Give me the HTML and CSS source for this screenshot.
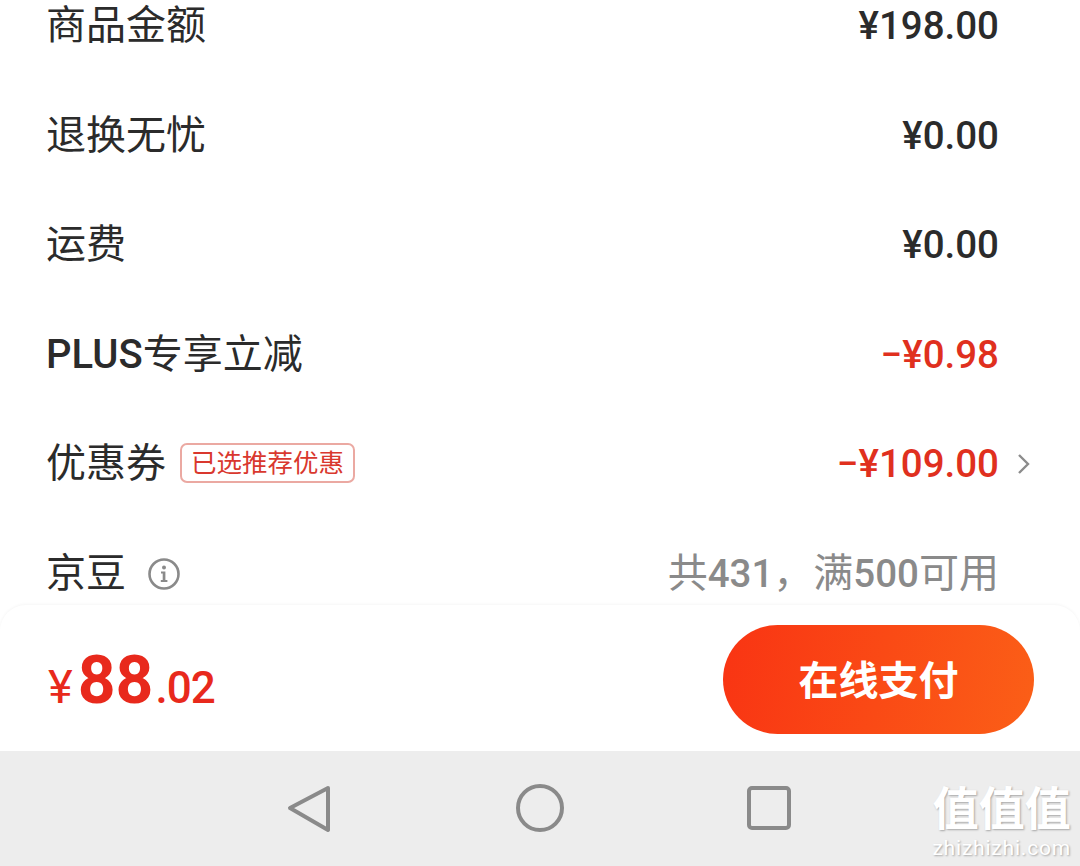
FILE: index.html
```html
<!doctype html>
<html>
<head>
	<title>订单结算</title>
	<meta charset="utf-8" />
	<link rel="stylesheet" href="styles.css">
</head>
	<body>
		<div class="list">
			<div class="row"><span class="label">商品金额</span><span class="value">¥198.00</span><span class="slot"></span></div>
			<div class="row"><span class="label">退换无忧</span><span class="value">¥0.00</span><span class="slot"></span></div>
			<div class="row"><span class="label">运费</span><span class="value">¥0.00</span><span class="slot"></span></div>
			<div class="row"><span class="label"><span class="latin">PLUS</span>专享立减</span><span class="value red">−¥0.98</span><span class="slot"></span></div>
			<div class="row">
				<span class="label">优惠券</span>
				<span class="tag">已选推荐优惠</span>
				<span class="value red">−¥109.00</span>
				<span class="slot">
					<svg width="14" height="24" viewBox="0 0 14 24"><polyline points="2,3 11,12 2,21" fill="none" stroke="#8c8c8c" stroke-width="2.4"/></svg>
				</span>
			</div>
			<div class="row">
				<span class="label">京豆</span>
				<svg class="info" width="34" height="34" viewBox="0 0 34 34">
					<circle cx="17" cy="17" r="14.5" fill="none" stroke="#8a8a8a" stroke-width="2.6"/>
					<circle cx="17" cy="10.5" r="2" fill="#8a8a8a"/>
					<path d="M14 14.5h4.4v8.5h2v2h-6.6v-2h1.900v-6.500h-1.700z" fill="#8a8a8a"/>
				</svg>
				<span class="value gray"><span class="cjk">共</span>431<span class="cjk">，满</span>500<span class="cjk">可用</span></span>
				<span class="slot"></span>
			</div>
		</div>
		<div class="footer">
			<div class="price"><span class="yen">¥</span><span class="big">88</span><span class="cents">.02</span></div>
			<button class="pay">在线支付</button>
		</div>
		<div class="nav">
			<svg width="48" height="52" viewBox="0 0 48 52"><path d="M42 5 L4 25 L42 47 Z" fill="none" stroke="#8a8a8a" stroke-width="4" stroke-linejoin="round"/></svg>
			<svg width="48" height="52" viewBox="0 0 48 52"><circle cx="24" cy="25" r="22" fill="none" stroke="#8a8a8a" stroke-width="4"/></svg>
			<svg width="48" height="52" viewBox="0 0 48 52"><rect x="3" y="5" width="40" height="40" rx="3" fill="none" stroke="#8a8a8a" stroke-width="4"/></svg>
			<div class="mark">
				<div class="mark-big">值值值</div>
				<div class="mark-url">zhizhizhi.com</div>
			</div>
		</div>
	</body>
</html>
```

FILE: styles.css
```css
html {
	background-color: #fff;
	font-family: "Roboto", "Noto Sans CJK SC", sans-serif;
}

body {
	margin: 0;
	height: 866px;
	width: 1080px;
	overflow: hidden;
	display: flex;
	flex-direction: column;
	color: #2b2b2b;
}

.list {
	height: 605px;
	overflow: hidden;
	flex-shrink: 0;
	display: flex;
	flex-direction: column;
}

.row {
	height: 109.5px;
	flex-shrink: 0;
	display: flex;
	align-items: center;
	padding: 0 45px 0 46px;
}

.row:first-child {
	margin-top: -28.5px;
}

.label {
	font-size: 40px;
	line-height: 60px;
}

.latin {
	font-weight: 500;
}

.value {
	margin-left: auto;
	font-size: 38.5px;
	font-weight: 500;
	line-height: 60px;
	white-space: nowrap;
}

.cjk {
	font-size: 40px;
	font-weight: 400;
}

.red {
	color: #e0301e;
}

.gray {
	color: #8a8a8a;
}

.slot {
	width: 36px;
	flex-shrink: 0;
	display: flex;
	justify-content: flex-end;
	padding-right: 4px;
	box-sizing: border-box;
}

.tag {
	margin: 0 0 3px 14px;
	height: 40px;
	box-sizing: border-box;
	border: 2px solid #eba9a2;
	border-radius: 7px;
	padding: 0 9px;
	font-size: 25.5px;
	line-height: 36px;
	color: #d9382e;
	white-space: nowrap;
}

.info {
	margin-left: 21px;
}

.footer {
	height: 146px;
	flex-shrink: 0;
	box-sizing: border-box;
	background-color: #fff;
	border-radius: 26px 26px 0 0;
	box-shadow: 0 -1px 3px rgba(0, 0, 0, 0.04);
	display: flex;
	align-items: center;
	justify-content: space-between;
	padding: 2px 46px 0 48px;
}

.price {
	color: #e8291c;
	display: flex;
	align-items: baseline;
	margin-top: 3px;
}

.yen {
	font-size: 47px;
	margin-right: 5px;
}

.big {
	font-size: 66px;
	font-weight: 700;
}

.cents {
	font-size: 44px;
	font-weight: 500;
	margin-left: 2px;
	letter-spacing: -1px;
}

.pay {
	width: 311px;
	height: 109px;
	border: 0;
	border-radius: 55px;
	padding: 0 0 3px;
	background: linear-gradient(100deg, #f93413, #fb5f17);
	color: #fff;
	font-family: inherit;
	font-size: 40px;
	font-weight: bold;
	cursor: pointer;
}

.nav {
	flex: 1;
	background-color: #ededed;
	display: flex;
	align-items: center;
	justify-content: center;
	gap: 182px;
	position: relative;
}

.mark {
	position: absolute;
	right: 9px;
	bottom: 8px;
	color: #fff;
	text-align: center;
	text-shadow: 1px 1px 2px rgba(0, 0, 0, 0.3);
	display: flex;
	flex-direction: column;
	gap: 6px;
}

.mark-big {
	font-size: 46px;
	line-height: 46px;
	font-weight: bold;
}

.mark-url {
	font-size: 21px;
	line-height: 20px;
	letter-spacing: 0.8px;
}
```
